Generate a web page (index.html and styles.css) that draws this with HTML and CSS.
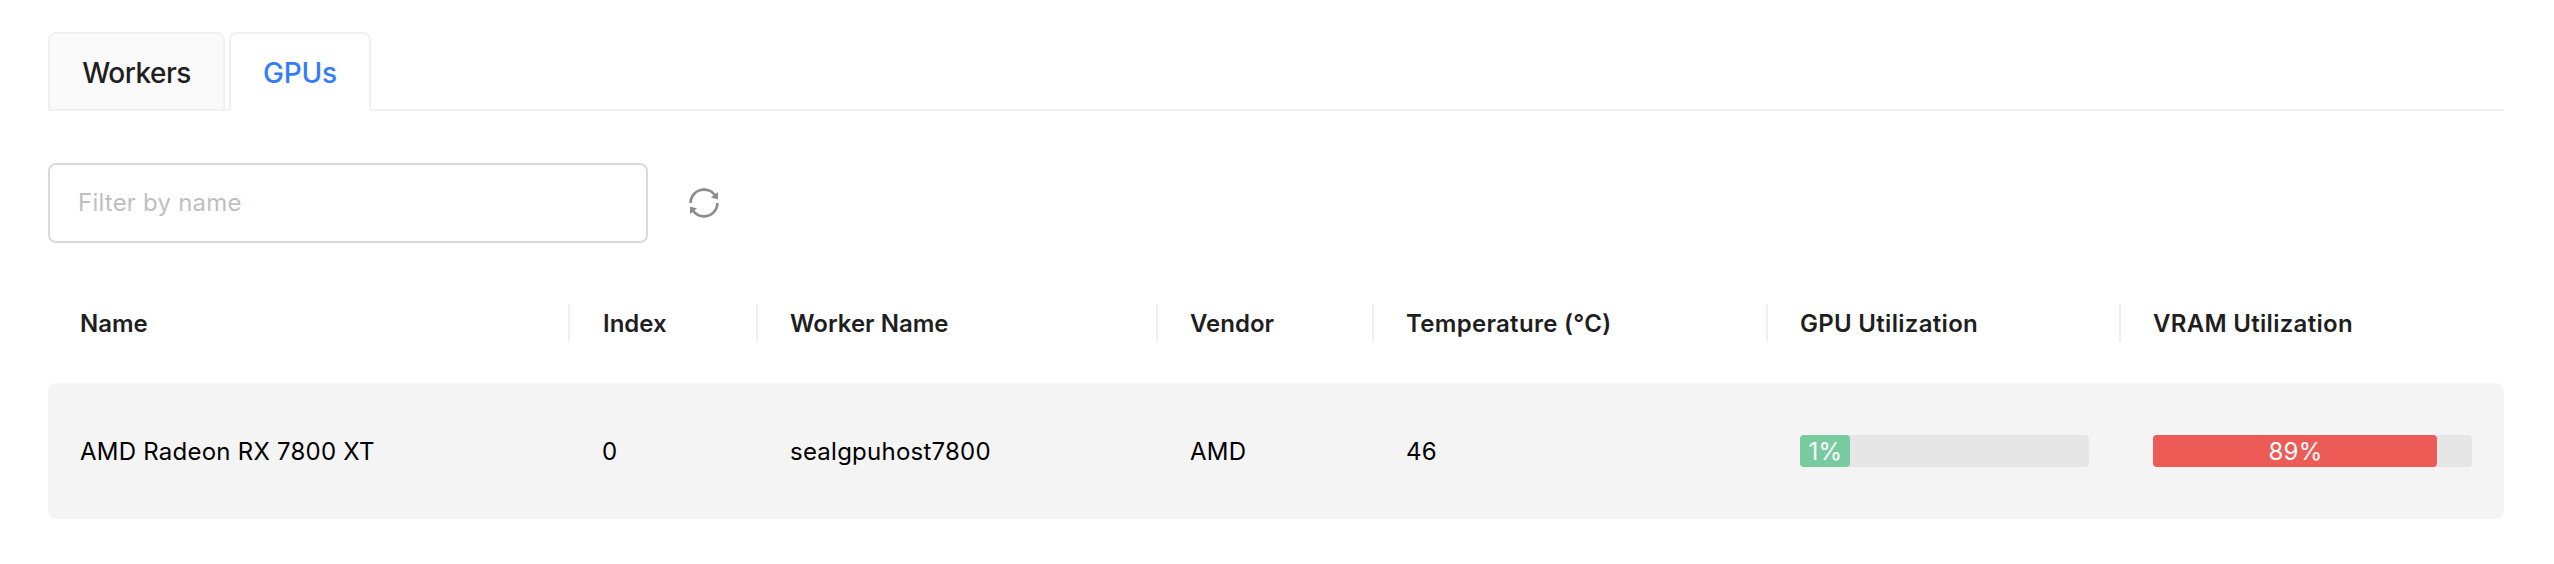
FILE: index.html
```html
<!DOCTYPE html>
<html lang="en">
<head>
<meta charset="utf-8">
<title>GPUs</title>
<link rel="stylesheet" href="styles.css">
</head>
<body>
<main class="page">
  <nav class="tabs" role="tablist">
    <div class="tab" role="tab">Workers</div>
    <div class="tab tab-active" role="tab" aria-selected="true">GPUs</div>
    <div class="tabs-rest"></div>
  </nav>
  <div class="toolbar">
    <input class="filter" type="text" placeholder="Filter by name">
    <button class="refresh" aria-label="Refresh">
      <svg class="refresh-icon" viewBox="0 0 1024 1024" fill="currentColor"><path d="M168 504.2c1-43.7 10-86.1 26.9-126 17.3-41 42.1-77.7 73.7-109.4S337 212.3 378 195c42.4-17.9 87.4-27 133.9-27s91.5 9.1 133.8 27A341.5 341.5 0 01755 268.8c9.9 9.9 19.2 20.4 27.8 31.4l-60.2 47a8 8 0 003 14.1l175.7 43c5 1.2 9.9-2.6 9.9-7.7l.8-180.9c0-6.7-7.7-10.5-12.9-6.3l-56.4 44.1C765.8 155.1 646.2 92 511.8 92 282.7 92 96.3 275.6 92 503.8a8 8 0 008 8.2h60c4.4 0 7.9-3.5 8-7.8zm756 7.8h-60c-4.4 0-7.9 3.5-8 7.8-1 43.7-10 86.1-26.9 126-17.3 41-42.1 77.8-73.7 109.4A342.45 342.45 0 01512.1 856a342.24 342.24 0 01-243.2-100.8c-9.9-9.9-19.2-20.4-27.8-31.4l60.2-47a8 8 0 00-3-14.1l-175.7-43c-5-1.2-9.9 2.6-9.9 7.7l-.7 181c0 6.7 7.7 10.5 12.9 6.3l56.4-44.1C258.2 868.9 377.8 932 512.2 932c229.2 0 415.5-183.7 419.8-411.8a8 8 0 00-8-8.2z"/></svg>
    </button>
  </div>
  <section class="table">
    <div class="row head">
      <div class="cell"><span>Name</span></div>
      <div class="cell"><span>Index</span></div>
      <div class="cell"><span>Worker Name</span></div>
      <div class="cell"><span>Vendor</span></div>
      <div class="cell cell-metric"><span>Temperature (°C)</span></div>
      <div class="cell cell-metric"><span>GPU Utilization</span></div>
      <div class="cell cell-metric"><span>VRAM Utilization</span></div>
    </div>
    <div class="row body">
      <div class="cell"><span>AMD Radeon RX 7800 XT</span></div>
      <div class="cell"><span>0</span></div>
      <div class="cell"><span>sealgpuhost7800</span></div>
      <div class="cell"><span>AMD</span></div>
      <div class="cell"><span>46</span></div>
      <div class="cell"><div class="bar"><div class="fill fill-low" style="width:1%">1%</div></div></div>
      <div class="cell"><div class="bar"><div class="fill fill-high" style="width:89%">89%</div></div></div>
    </div>
  </section>
</main>
</body>
</html>
```
FILE: styles.css
```css
* { box-sizing: border-box; }
body {
  margin: 0;
  background: #fff;
  color: #000;
  font: 400 24px/38px Inter, "Liberation Sans", sans-serif;
}
.page { padding: 32px 50px 45px 48px; }

.tabs {
  display: flex;
  height: 79px;
  background: linear-gradient(#f0f0f0, #f0f0f0) left bottom / 183px 2px no-repeat;
}
.tab {
  width: 177px;
  margin-right: 4px;
  border: 2px solid #f0f0f0;
  border-radius: 8px 8px 0 0;
  background: #fafafa;
  color: #1f1f1f;
  font-size: 28px;
  font-weight: 500;
  letter-spacing: -0.5px;
  line-height: 79px;
  text-align: center;
}
.tab-active {
  width: 142px;
  margin-right: 0;
  background: #fff;
  border-bottom-color: #fff;
  color: #357bfb;
  letter-spacing: -0.2px;
}
.tabs-rest { flex: 1; border-bottom: 2px solid #f0f0f0; }

.toolbar {
  display: flex;
  align-items: center;
  gap: 38px;
  margin-top: 52px;
}
.filter {
  width: 600px;
  height: 80px;
  padding: 0 28px 2px;
  border: 2px solid #d9d9d9;
  border-radius: 8px;
  background: #fff;
  font: inherit;
  letter-spacing: 0.22px;
  outline: none;
}
.filter::placeholder { color: #bfbfbf; opacity: 1; }
.refresh {
  display: flex;
  padding: 0;
  border: 0;
  background: none;
  color: #8c8c8c;
}
.refresh-icon { width: 36px; height: 36px; }

.table { margin-top: 61px; }
.row {
  display: grid;
  grid-template-columns: 522px 188px 400px 216px 394px 353px 383px;
  align-items: center;
}
.cell { padding: 0 32px; white-space: nowrap; }
.head { height: 38px; color: #1f1f1f; font-weight: 600; line-height: 40px; }
.head .cell { height: 38px; border-right: 2px solid #f0f0f0; }
.head .cell:last-child { border-right: 0; }
.head .cell:nth-child(2) { padding-left: 33px; }
.head .cell-metric { letter-spacing: 0.3px; }
.body {
  height: 136px;
  margin-top: 41px;
  border-radius: 8px;
  background: #f4f4f4;
  line-height: 40px;
  letter-spacing: 0.24px;
}
.body .cell > span { display: block; padding-top: 2px; }
.bar { height: 32px; border-radius: 4px; background: #e6e6e6; }
.fill {
  min-width: 50px;
  height: 32px;
  padding-left: 1px;
  border-radius: 4px;
  color: #fff;
  line-height: 34px;
  text-align: center;
}
.fill-low { background: #77cb9e; }
.fill-high { background: #ed5b56; }
```
